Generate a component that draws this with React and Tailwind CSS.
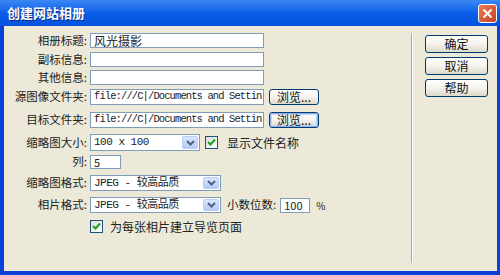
const cjk = { fontFamily: '"Noto Sans CJK SC", "Liberation Sans", sans-serif' };
const mono = { fontFamily: '"Liberation Mono", "Noto Sans CJK SC", monospace' };

const Label = ({ children }) => (
  <div className="w-[83px] shrink-0 mr-[3px] text-right text-[11.5px] leading-none text-[#222]" style={cjk}>
    {children}
  </div>
);

const TextBox = ({ className, children, mono: isMono }) => (
  <div
    className={`h-full border border-[#7f9db9] bg-white flex items-center px-[3px] overflow-hidden whitespace-nowrap text-[12px] text-[#222] ${className}`}
    style={isMono ? mono : cjk}
  >
    {children}
  </div>
);

const Combo = ({ className, children }) => (
  <div className={`h-full border border-[#7f9db9] bg-white flex items-center ${className}`}>
    <div className="flex-1 px-[3px] text-[11px] tracking-[-0.5px] whitespace-nowrap overflow-hidden text-[#222]" style={mono}>
      {children}
    </div>
    <div className="w-[16px] h-[calc(100%-2px)] mr-[1px] rounded-[2px] border border-[#b9cdf6] bg-gradient-to-b from-[#dbe6fd] to-[#b7cbf8] flex items-center justify-center">
      <svg width="9" height="6" viewBox="0 0 9 6">
        <path d="M1 1 L4.5 4.5 L8 1" fill="none" stroke="#4d6185" strokeWidth="2" />
      </svg>
    </div>
  </div>
);

const Check = () => (
  <div className="w-[13px] h-[13px] border border-[#1c5180] bg-gradient-to-br from-[#dcdcd7] to-white flex items-center justify-center">
    <svg width="9" height="9" viewBox="0 0 9 9">
      <path d="M1 4 L3.5 6.5 L8 1.5" fill="none" stroke="#21a121" strokeWidth="2" />
    </svg>
  </div>
);

const XpButton = ({ children, className, focused }) => (
  <div
    className={`rounded-[3px] border border-[#003c74] bg-gradient-to-b from-white via-[#f4f3ee] to-[#dcd9cb] flex items-center justify-center text-[12px] leading-none text-[#111] ${className}`}
    style={cjk}
  >
    <div
      className={`w-full h-full flex items-center justify-center rounded-[2px] ${
        focused ? "border border-[#8bb0ef] shadow-[inset_0_0_0_1px_#c5d7f7]" : ""
      }`}
    >
      {children}
    </div>
  </div>
);

export default function App() {
  return (
    <div className="w-[500px] h-[275px] flex flex-col bg-[#0842da] overflow-hidden" style={cjk}>
      {/* title bar */}
      <div className="h-[26px] shrink-0 flex items-center justify-between pl-[7px] pr-[3px] bg-gradient-to-b from-[#3b87f5] via-[#0a5ee9] to-[#0552dd]">
        <span className="text-white font-bold text-[13px] [text-shadow:1px_1px_0_#0a2a8a]">创建网站相册</span>
        <div className="w-[19px] h-[19px] mt-[1px] rounded-[3px] border border-white bg-gradient-to-br from-[#e97b58] to-[#c9401e] flex items-center justify-center">
          <svg width="11" height="11" viewBox="0 0 11 11">
            <path d="M1.5 1.5 L9.5 9.5 M9.5 1.5 L1.5 9.5" stroke="white" strokeWidth="2" />
          </svg>
        </div>
      </div>

      {/* body */}
      <div className="flex-1 flex mr-[3px] mb-[4px] ml-[4px] bg-[#ece9d8]">
        <div className="w-[407px] shrink-0 flex flex-col pt-[7px]">
          <div className="h-[15px] flex items-center">
            <Label>相册标题:</Label>
            <TextBox className="w-[174px]">风光摄影</TextBox>
          </div>
          <div className="h-[15px] mt-[4px] flex items-center">
            <Label>副标信息:</Label>
            <TextBox className="w-[174px]" />
          </div>
          <div className="h-[15px] mt-[3px] flex items-center">
            <Label>其他信息:</Label>
            <TextBox className="w-[174px]" />
          </div>
          <div className="h-[16px] mt-[4px] flex items-center">
            <Label>源图像文件夹:</Label>
            <TextBox mono className="w-[174px] !text-[10.5px] tracking-[-0.9px]">file:///C|/Documents and Settin</TextBox>
            <XpButton className="ml-[5px] w-[50px] h-[16px]">浏览...</XpButton>
          </div>
          <div className="h-[16px] mt-[7px] flex items-center">
            <Label>目标文件夹:</Label>
            <TextBox mono className="w-[174px] !text-[10.5px] tracking-[-0.9px]">file:///C|/Documents and Settin</TextBox>
            <XpButton focused className="ml-[5px] w-[50px] h-[16px]">浏览...</XpButton>
          </div>
          <div className="h-[17px] mt-[6px] flex items-center">
            <Label>缩略图大小:</Label>
            <Combo className="w-[110px]">100 x 100</Combo>
            <div className="ml-[5px]"><Check /></div>
            <span className="ml-[9px] text-[12px] text-[#222]">显示文件名称</span>
          </div>
          <div className="h-[14px] mt-[4px] flex items-center">
            <Label>列:</Label>
            <TextBox className="w-[31px] !text-[11px]">5</TextBox>
          </div>
          <div className="h-[16px] mt-[6px] flex items-center">
            <Label>缩略图格式:</Label>
            <Combo className="w-[131px]">JPEG - 较高品质</Combo>
          </div>
          <div className="h-[16px] mt-[6px] flex items-center">
            <Label>相片格式:</Label>
            <Combo className="w-[131px]">JPEG - 较高品质</Combo>
            <span className="ml-[6px] text-[11.5px] text-[#222]">小数位数:</span>
            <div className="h-[15px] ml-[4px]">
              <TextBox className="w-[30px] !text-[11px]">100</TextBox>
            </div>
            <span className="ml-[6px] text-[10px] text-[#222]">%</span>
          </div>
          <div className="h-[13px] mt-[7px] flex items-center pl-[86px]">
            <Check />
            <span className="ml-[7px] text-[12px] text-[#222]">为每张相片建立导览页面</span>
          </div>
        </div>

        {/* divider */}
        <div className="w-[2px] mt-[7px] mb-[8px] flex">
          <div className="w-[1px] bg-[#aca899]" />
          <div className="w-[1px] bg-white" />
        </div>

        {/* buttons */}
        <div className="flex flex-col pt-[9px] pl-[12px] gap-[4px]">
          <XpButton className="w-[63px] h-[18px]">确定</XpButton>
          <XpButton className="w-[63px] h-[18px]">取消</XpButton>
          <XpButton className="w-[63px] h-[18px]">帮助</XpButton>
        </div>
      </div>
    </div>
  );
}
